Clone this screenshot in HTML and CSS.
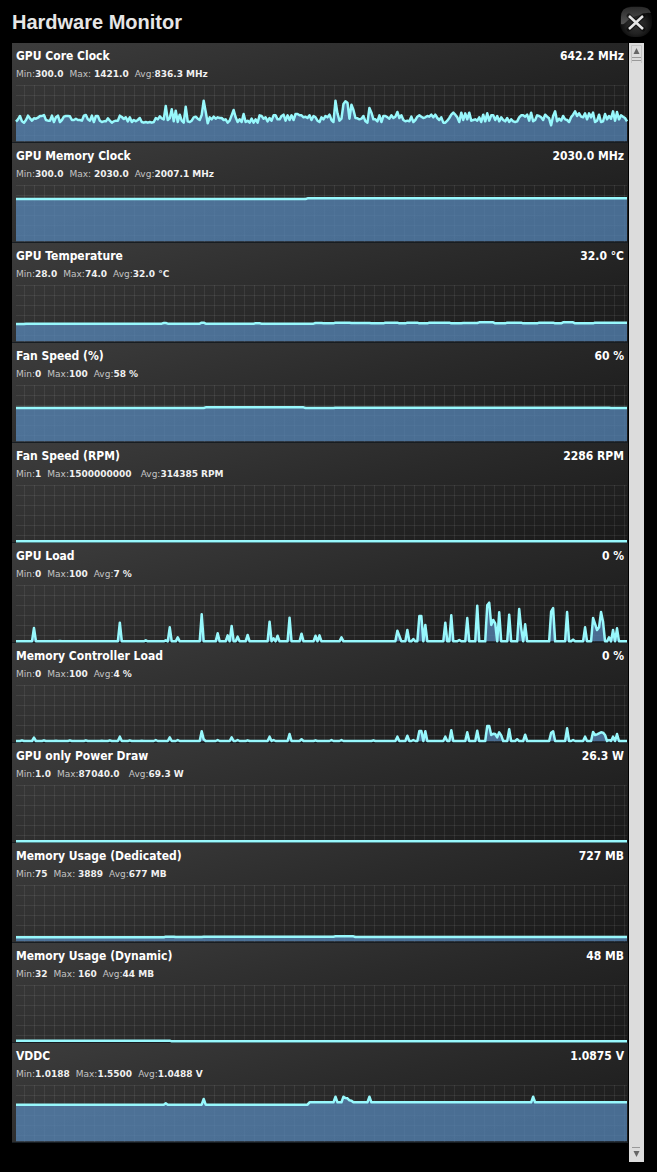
FILE: index.html
```html
<!DOCTYPE html>
<html lang="en">

<head>
	<meta charset="UTF-8">
	<title>Hardware Monitor</title>
	<link rel="stylesheet" href="styles.css">
</head>

<body>

	<header class="top">
		<h1>Hardware Monitor</h1>
		<button class="close" type="button" aria-label="Close">
			<svg viewBox="0 0 32 32" width="32" height="32">
				<defs>
					<radialGradient id="ball" cx="50%" cy="60%" r="50%">
						<stop offset="0" stop-color="#333" />
						<stop offset="0.6" stop-color="#222" />
						<stop offset="1" stop-color="#0b0b0b" />
					</radialGradient>
					<linearGradient id="shine" x1="0" y1="0" x2="0" y2="1">
						<stop offset="0" stop-color="#2a2a2a" />
						<stop offset="1" stop-color="#555" />
					</linearGradient>
				</defs>
				<rect x="0" y="0" width="32" height="31" rx="14" fill="url(#ball)" />
				<path d="M1 18V11Q1 1 11 1H22Q29 1 31 7Q26 6 20 9Q10 11 5 17Q3 19 1 18Z" fill="url(#shine)" />
				<path d="M9 10L23 23M23 10L9 23" stroke="#000" stroke-width="5" stroke-linecap="round" opacity="0.5" />
				<path d="M9 10L23 23M23 10L9 23" stroke="#e6e6e6" stroke-width="2.5" />
			</svg>
		</button>
	</header>

	<main class="monitor">
		<div class="list">
			<section class="item">
				<div class="name"><h2>GPU Core Clock</h2><span>642.2 MHz</span></div>
				<p class="stat"><span>Min:<b>300.0</b></span><span>Max: <b>1421.0</b></span><span>Avg:<b>836.3 MHz</b></span></p>
				<svg class="chart" data-chart="core"></svg>
			</section>
			<section class="item">
				<div class="name"><h2>GPU Memory Clock</h2><span>2030.0 MHz</span></div>
				<p class="stat"><span>Min:<b>300.0</b></span><span>Max: <b>2030.0</b></span><span>Avg:<b>2007.1 MHz</b></span></p>
				<svg class="chart" data-chart="memory"></svg>
			</section>
			<section class="item">
				<div class="name"><h2>GPU Temperature</h2><span>32.0 °C</span></div>
				<p class="stat"><span>Min:<b>28.0</b></span><span>Max:<b>74.0</b></span><span>Avg:<b>32.0 °C</b></span></p>
				<svg class="chart" data-chart="temp"></svg>
			</section>
			<section class="item">
				<div class="name"><h2>Fan Speed (%)</h2><span>60 %</span></div>
				<p class="stat"><span>Min:<b>0</b></span><span>Max:<b>100</b></span><span>Avg:<b>58 %</b></span></p>
				<svg class="chart" data-chart="fan"></svg>
			</section>
			<section class="item">
				<div class="name"><h2>Fan Speed (RPM)</h2><span>2286 RPM</span></div>
				<p class="stat"><span>Min:<b>1</b></span><span>Max:<b>1500000000 </b></span><span>Avg:<b>314385 RPM</b></span></p>
				<svg class="chart" data-chart="rpm"></svg>
			</section>
			<section class="item">
				<div class="name"><h2>GPU Load</h2><span>0 %</span></div>
				<p class="stat"><span>Min:<b>0</b></span><span>Max:<b>100</b></span><span>Avg:<b>7 %</b></span></p>
				<svg class="chart" data-chart="load"></svg>
			</section>
			<section class="item">
				<div class="name"><h2>Memory Controller Load</h2><span>0 %</span></div>
				<p class="stat"><span>Min:<b>0</b></span><span>Max:<b>100</b></span><span>Avg:<b>4 %</b></span></p>
				<svg class="chart" data-chart="controller"></svg>
			</section>
			<section class="item">
				<div class="name"><h2>GPU only Power Draw</h2><span>26.3 W</span></div>
				<p class="stat"><span>Min:<b>1.0</b></span><span>Max:<b>87040.0 </b></span><span>Avg:<b>69.3 W</b></span></p>
				<svg class="chart" data-chart="power"></svg>
			</section>
			<section class="item">
				<div class="name"><h2>Memory Usage (Dedicated)</h2><span>727 MB</span></div>
				<p class="stat"><span>Min:<b>75</b></span><span>Max: <b>3889</b></span><span>Avg:<b>677 MB</b></span></p>
				<svg class="chart" data-chart="dedicated"></svg>
			</section>
			<section class="item">
				<div class="name"><h2>Memory Usage (Dynamic)</h2><span>48 MB</span></div>
				<p class="stat"><span>Min:<b>32</b></span><span>Max: <b>160</b></span><span>Avg:<b>44 MB</b></span></p>
				<svg class="chart" data-chart="dynamic"></svg>
			</section>
			<section class="item">
				<div class="name"><h2>VDDC</h2><span>1.0875 V</span></div>
				<p class="stat"><span>Min:<b>1.0188</b></span><span>Max:<b>1.5500</b></span><span>Avg:<b>1.0488 V</b></span></p>
				<svg class="chart" data-chart="vddc"></svg>
			</section>
		</div>
		<div class="scroll">
			<button class="up" type="button" aria-label="Scroll up">
				<svg viewBox="0 0 15 20" width="15" height="20">
					<path d="M2.5 20V2.5H12.5V20" fill="none" stroke="#c4c4c4" />
					<path d="M4.5 11L7.5 5L10.5 11Z" fill="#666" />
					<path d="M3 14.5H12M3 17.5H12" stroke="#999" />
				</svg>
			</button>
			<button class="down" type="button" aria-label="Scroll down">
				<svg viewBox="0 0 15 16" width="15" height="16">
					<path d="M3 1.5H11" stroke="#999" />
					<path d="M4.5 5H10.5L7.5 11Z" fill="#666" />
				</svg>
			</button>
		</div>
	</main>

	<script src="script.js"></script>

</body>

</html>
```
FILE: styles.css
```css
* {
	margin: 0;
	padding: 0;
	box-sizing: border-box;
}

body {
	background: #000;
	color: #fff;
	font-family: "DejaVu Sans", Verdana, sans-serif;
	padding-bottom: 10px;
}

button {
	border: none;
	background: none;
	cursor: pointer;
}

button svg {
	display: block;
}

.top {
	display: flex;
	justify-content: space-between;
	align-items: flex-start;
	padding: 6px 5px 5px 12px;
}

.top h1 {
	font-family: "Liberation Sans", Arial, sans-serif;
	font-size: 20px;
	line-height: 32px;
	color: #e6e6e6;
}

.monitor {
	display: flex;
	gap: 1px;
	padding: 0 13px 0 12px;
}

.list {
	flex: 1;
	padding-bottom: 19px;
}

.item {
	padding: 4px 1px 0 4px;
	height: 100px;
	background: linear-gradient(165deg, #3d3d3d, #2a2a2a 50%, #191919);
	border-bottom: 1px solid #171d22;
}

.name {
	display: flex;
	justify-content: space-between;
	padding-right: 3px;
	font-family: "DejaVu Sans Condensed", Tahoma, sans-serif;
	font-size: 12px;
	font-weight: bold;
	line-height: 18px;
}

.name h2 {
	font-size: 12px;
}

.stat {
	display: flex;
	gap: 6px;
	padding-top: 1px;
	margin-bottom: 3px;
	font-size: 9px;
	line-height: 16px;
	color: #c4c4c4;
	white-space: pre;
}

.stat b {
	color: #f0f0f0;
}

.chart {
	display: block;
	width: 100%;
	height: 57px;
	overflow: visible;
	background-image: linear-gradient(rgba(255, 255, 255, .07) 1px, transparent 1px),
		linear-gradient(90deg, rgba(255, 255, 255, .07) 1px, transparent 1px);
	background-size: 10px 10px;
	background-position: 0 0, 8px 0;
}

.area {
	fill: rgba(88, 136, 185, .75);
}

.line {
	fill: none;
	stroke: #98f8fc;
	stroke-width: 2.5px;
	stroke-linejoin: round;
	vector-effect: non-scaling-stroke;
}

.scroll {
	display: flex;
	flex-direction: column;
	justify-content: space-between;
	width: 15px;
	background: #dcdcdc;
}
```
FILE: script.js
```js
// 306 steps across, y grows downwards, 184 is the zero line
var LAST = 306;
var ZERO = 184;

var core = [
	125, 118, 108, 124, 128, 120, 107, 115, 122, 115, 116, 113, 108, 108, 105, 120, 122, 122, 107, 126,
	112, 107, 126, 120, 110, 108, 108, 109, 120, 120, 116, 120, 120, 122, 107, 105, 118, 122, 107, 126,
	108, 108, 122, 126, 124, 124, 115, 122, 128, 124, 122, 122, 107, 111, 117, 112, 124, 112, 126, 120,
	124, 120, 114, 126, 128, 126, 128, 126, 128, 126, 114, 118, 109, 115, 118, 78, 120, 115, 88, 124,
	92, 126, 104, 122, 128, 80, 124, 126, 122, 112, 110, 116, 120, 105, 62, 95, 130, 112, 118, 110,
	116, 112, 114, 114, 120, 118, 128, 122, 106, 90, 112, 126, 118, 126, 102, 126, 122, 128, 116, 128,
	118, 128, 106, 108, 116, 112, 124, 114, 122, 106, 106, 118, 118, 108, 104, 122, 106, 120, 106, 120,
	102, 102, 106, 106, 112, 110, 114, 106, 120, 108, 112, 122, 126, 112, 118, 108, 112, 104, 120, 126,
	62, 100, 122, 116, 72, 64, 68, 116, 74, 90, 114, 115, 118, 116, 108, 124, 128, 84, 98, 118,
	118, 124, 106, 126, 108, 108, 112, 116, 106, 114, 110, 96, 114, 106, 120, 124, 122, 124, 110, 126,
	120, 110, 106, 110, 114, 112, 108, 110, 104, 112, 104, 114, 120, 112, 128, 128, 122, 114, 104, 98,
	104, 112, 126, 98, 120, 100, 118, 98, 122, 120, 118, 122, 112, 126, 104, 124, 100, 122, 106, 106,
	120, 108, 124, 112, 120, 124, 114, 126, 118, 124, 126, 124, 112, 106, 106, 110, 104, 122, 98, 124,
	120, 106, 108, 112, 120, 104, 110, 115, 136, 108, 94, 124, 116, 122, 108, 118, 120, 126, 112, 104,
	94, 108, 100, 110, 112, 100, 118, 100, 112, 98, 126, 122, 104, 126, 124, 102, 118, 108, 116, 94,
	122, 96, 118, 106, 110, 114, 124
];

// flat line at base, with single samples replaced
function spikes(base, list) {
	var arr = [];
	for (var i = 0; i <= LAST; i++) {
		arr.push(i in list ? list[i] : base);
	}
	return arr;
}

// [from, y] pairs, each level holds until the next one
function levels(list) {
	var arr = [];
	var n = 0;
	for (var i = 0; i <= LAST; i++) {
		if (n < list.length - 1 && i >= list[n + 1][0]) {
			n++;
		}
		arr.push(list[n][1]);
	}
	return arr;
}

var vddc = levels([[0, 74], [147, 67]]);
vddc[75] = 70;
vddc[94] = 57;
vddc[160] = vddc[164] = vddc[177] = vddc[259] = 50;
vddc[165] = 54;
vddc[166] = 55;
vddc[167] = 61;
vddc[168] = 62;

var charts = {
	core: core,
	memory: levels([[0, 57], [146, 55]]),
	temp: levels([[0, 132], [5, 131], [74, 129], [76, 131], [93, 128], [95, 131], [120, 130], [123, 131], [150, 129],
		[154, 130], [160, 128], [168, 129], [178, 130], [185, 128], [192, 130], [196, 128], [202, 130], [207, 128],
		[218, 130], [224, 129], [232, 127], [240, 130], [246, 128], [254, 130], [262, 128], [270, 130], [274, 127],
		[280, 130], [290, 128]]),
	fan: levels([[0, 84], [95, 82], [145, 84], [160, 83], [298, 84]]),
	rpm: levels([[0, ZERO]]),
	load: spikes(ZERO, {
		9: 144, 22: 183, 52: 128, 65: 181, 75: 181, 77: 142, 81: 172, 93: 103, 101: 160, 106: 166,
		108: 138, 111: 170, 116: 165, 127: 125, 129: 175, 131: 167, 137: 113, 143: 161, 150: 167, 152: 166,
		163: 172, 191: 152, 192: 168, 196: 150, 199: 177, 202: 108, 203: 108, 205: 135, 215: 128, 218: 106,
		222: 180, 226: 114, 231: 77, 236: 76, 237: 68, 238: 135, 239: 120, 240: 130, 242: 97, 247: 104, 252: 87,
		253: 145, 255: 133, 268: 95, 269: 84, 276: 96, 279: 179, 285: 142, 289: 114, 290: 132, 291: 150,
		292: 142, 293: 96, 294: 125, 297: 172, 299: 150, 301: 145
	}),
	controller: spikes(183, {
		3: 181, 9: 173, 14: 181, 20: 182, 27: 181, 35: 181, 43: 182, 47: 181, 52: 170, 57: 181, 63: 182, 70: 180,
		77: 172, 81: 180, 93: 154, 94: 178, 101: 180, 108: 172, 111: 180, 116: 181, 127: 170, 129: 180,
		137: 162, 143: 178, 150: 181, 158: 180, 163: 180, 179: 181, 191: 170, 196: 167, 199: 180, 202: 153,
		203: 153, 205: 154, 215: 170, 218: 151, 226: 157, 231: 152, 236: 138, 237: 138, 238: 165, 239: 161,
		240: 162, 241: 172, 242: 157, 243: 166, 247: 148, 251: 178, 255: 164, 268: 158, 269: 154, 276: 145,
		279: 180, 285: 170, 289: 156, 290: 165, 291: 163, 292: 160, 293: 157, 294: 158, 295: 165, 297: 180,
		299: 170, 301: 162
	}),
	power: levels([[0, ZERO]]),
	dedicated: levels([[0, 172], [75, 170], [80, 171], [94, 170], [160, 169], [170, 171]]),
	dynamic: levels([[0, 182], [78, 184]]),
	vddc: vddc
};

document.querySelectorAll(".chart").forEach(function (svg) {
	var points = charts[svg.dataset.chart].map(function (y, i) {
		return i + "," + y;
	}).join(" ");
	svg.setAttribute("viewBox", "0 15 " + LAST + " 171");
	svg.setAttribute("preserveAspectRatio", "none");
	svg.innerHTML =
		'<polygon class="area" points="0,' + ZERO + ' ' + points + ' ' + LAST + ',' + ZERO + '"/>' +
		'<polyline class="line" points="' + points + '"/>';
});
```
